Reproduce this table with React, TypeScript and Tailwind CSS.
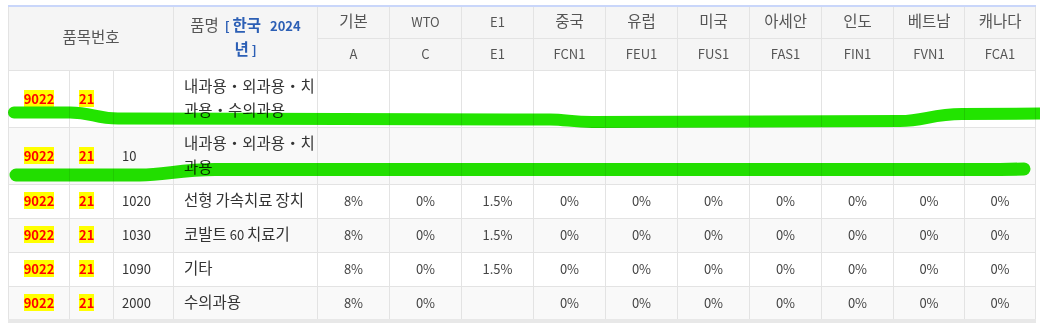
import React from "react";

const rates = [
  { ko: "기본", code: "A" },
  { ko: "WTO", code: "C" },
  { ko: "E1", code: "E1" },
  { ko: "중국", code: "FCN1" },
  { ko: "유럽", code: "FEU1" },
  { ko: "미국", code: "FUS1" },
  { ko: "아세안", code: "FAS1" },
  { ko: "인도", code: "FIN1" },
  { ko: "베트남", code: "FVN1" },
  { ko: "캐나다", code: "FCA1" },
];

const rateWidths = [72, 72, 72, 72, 72, 72, 72, 72, 71, 71];

type Row = { sub: string; name: string[]; vals: string[] | null; h: string };

const rows: Row[] = [
  { sub: "", name: ["내과용・외과용・치", "과용・수의과용"], vals: null, h: "h-[56px]" },
  { sub: "10", name: ["내과용・외과용・치", "과용"], vals: null, h: "h-[57px]" },
  { sub: "1020", name: ["선형 가속치료 장치"], vals: ["8%", "0%", "1.5%", "0%", "0%", "0%", "0%", "0%", "0%", "0%"], h: "h-[34px]" },
  { sub: "1030", name: ["코발트 60 치료기"], vals: ["8%", "0%", "1.5%", "0%", "0%", "0%", "0%", "0%", "0%", "0%"], h: "h-[34px]" },
  { sub: "1090", name: ["기타"], vals: ["8%", "0%", "1.5%", "0%", "0%", "0%", "0%", "0%", "0%", "0%"], h: "h-[34px]" },
  { sub: "2000", name: ["수의과용"], vals: ["8%", "0%", "", "0%", "0%", "0%", "0%", "0%", "0%", "0%"], h: "h-[33px]" },
];

// Hangul runs are set a little larger so they match the reference's wider glyphs
function K({ t }: { t: string }) {
  const parts = t.split(/([\u3131-\uD79D\u30FB]+)/);
  return (
    <>
      {parts.map((p, i) =>
        /[\u3131-\uD79D\u30FB]/.test(p) ? (
          <span key={i} className="text-[15.5px] leading-[14px]">
            {p}
          </span>
        ) : (
          <React.Fragment key={i}>{p}</React.Fragment>
        )
      )}
    </>
  );
}

const Hl = ({ children }: { children: React.ReactNode }) => (
  <span className="inline-block bg-[#ffff00] font-bold text-[#ff0000] leading-[17px]">{children}</span>
);

export default function App() {
  const cell = "border border-[#e3e3e3] p-0";
  return (
    <div className="relative w-[1040px] h-[323px] bg-white font-['Noto_Sans_CJK_KR','Noto_Sans',sans-serif] text-[13px] leading-[24px] text-[#333]">
      <div className="pt-[5px] pl-[8px]">
        <table className="table-fixed border-collapse w-[1027px] border-t-[2px] border-t-[#c9d6fa] border-b-[4px] border-b-[#e8e8e8]">
          <colgroup>
            <col className="w-[61px]" />
            <col className="w-[44px]" />
            <col className="w-[60px]" />
            <col className="w-[144px]" />
            {rateWidths.map((w, i) => (
              <col key={i} style={{ width: w }} />
            ))}
          </colgroup>
          <thead>
            <tr className="h-[32px] bg-[#f5f5f5] text-[#555]">
              <th rowSpan={2} colSpan={3} className={`${cell} font-normal text-center`}>
                <K t="품목번호" />
              </th>
              <th rowSpan={2} className={`${cell} font-normal text-center px-[2px]`}>
                <div className="whitespace-nowrap">
                  <K t="품명" />
                  {"\u00a0\u00a0"}
                  <span className="font-bold text-[#2c5fb5]">
                    {"[\u00a0"}
                    <K t="한국" />
                    {"\u00a0\u00a0\u00a02024"}
                  </span>
                </div>
                <div className="font-bold text-[#2c5fb5]">
                  <K t="년" />
                  {" ]"}
                </div>
              </th>
              {rates.map((r) => (
                <th key={r.code} className={`${cell} font-normal text-center`}>
                  <K t={r.ko} />
                </th>
              ))}
            </tr>
            <tr className="h-[32px] bg-[#f5f5f5] text-[#555]">
              {rates.map((r) => (
                <th key={r.code} className={`${cell} font-normal text-center`}>
                  {r.code}
                </th>
              ))}
            </tr>
          </thead>
          <tbody>
            {rows.map((row, i) => (
              <tr key={i} className={`${row.h} ${i % 2 === 1 ? "bg-[#f9f9f9]" : "bg-white"}`}>
                <td className={`${cell} text-center`}>
                  <Hl>9022</Hl>
                </td>
                <td className={`${cell} pl-[9px]`}>
                  <Hl>21</Hl>
                </td>
                <td className={`${cell} pl-[8px]`}>{row.sub}</td>
                <td className={`${cell} pl-[10px] pr-[2px] py-[4px]`}>
                  {row.name.map((n, k) => (
                    <div key={k} className="whitespace-nowrap">
                      <K t={n} />
                    </div>
                  ))}
                </td>
                {rates.map((r, k) => (
                  <td key={r.code} className={`${cell} text-center text-[#444]`}>
                    {row.vals ? row.vals[k] : ""}
                  </td>
                ))}
              </tr>
            ))}
          </tbody>
        </table>
      </div>
      <svg
        className="absolute left-0 top-0 pointer-events-none mix-blend-multiply"
        width={1040}
        height={323}
        viewBox="0 0 1040 323"
      >
        <path
          d="M 14 112.5 L 70 112.5 C 92 112.5, 95 118.5, 118 118.5 L 550 119.5 C 566 119.5, 572 122, 592 122 L 900 121 C 924 121, 932 114, 962 114 L 1046 113.5"
          fill="none"
          stroke="#22e400"
          strokeWidth={12}
          strokeLinecap="round"
        />
        <path
          d="M 16 175 L 140 175 C 165 175, 180 169.5, 215 169.5 L 1000 169.5 L 1024 169"
          fill="none"
          stroke="#22e400"
          strokeWidth={13}
          strokeLinecap="round"
        />
      </svg>
    </div>
  );
}
